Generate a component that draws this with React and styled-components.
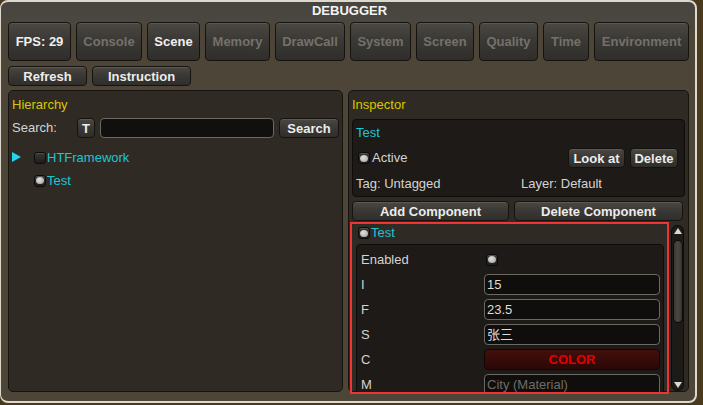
import React from "react";
import styled, { createGlobalStyle, css } from "styled-components";

const Global = createGlobalStyle`
  html, body { margin: 0; padding: 0; }
  body {
    background: #4a3a1d;
    width: 703px;
    height: 405px;
    overflow: hidden;
    font-family: "Liberation Sans", Arial, "Noto Sans CJK SC", sans-serif;
    font-size: 13px;
  }
  * { box-sizing: border-box; }
`;

const Window = styled.div`
  width: 697px;
  height: 403px;
  border: 2px solid #dcd8cc;
  border-left-width: 1.5px;
  border-radius: 8px;
  background: linear-gradient(#47453f 0px, #4a4640 18px, #4d4638 24px, #4d4638 100%);
  display: flex;
  flex-direction: column;
  padding: 0 6px 9px 7px;
`;

const Title = styled.div`
  height: 18px;
  line-height: 18px;
  text-align: center;
  font-weight: bold;
  font-size: 13px;
  color: #f4f4f4;
  padding-left: 2px;
`;

const TabRow = styled.div`
  margin-top: 2px;
  height: 39px;
  display: flex;
  justify-content: space-between;
`;

const buttonBase = css`
  display: flex;
  align-items: center;
  justify-content: center;
  border: 1px solid #15130f;
  border-radius: 4px;
  background: linear-gradient(#4b4843, #3b3935 45%, #302e2b);
  box-shadow: inset 0 1px 0 rgba(255, 255, 255, 0.1);
  font-weight: bold;
  font-size: 13px;
  white-space: nowrap;
  flex: none;
`;

const Tab = styled.div`
  ${buttonBase}
  width: ${(p) => p.$w}px;
  color: ${(p) => (p.$active ? "#f0f0f0" : "#74716b")};
`;

const Button = styled.div`
  ${buttonBase}
  width: ${(p) => p.$w}px;
  height: ${(p) => p.$h || 20}px;
  color: #ececec;
`;

const ActionRow = styled.div`
  margin-top: 5px;
  height: 20px;
  display: flex;
  gap: 5px;
`;

const Panels = styled.div`
  margin-top: 4px;
  flex: 1;
  display: flex;
  gap: 5px;
  min-height: 0;
`;

const Panel = styled.div`
  ${(p) => (p.$w ? `width: ${p.$w}px; flex: none;` : "flex: 1;")}
  background: #302a25;
  border: 1px solid #17130f;
  border-radius: 5px;
  padding: 6px 3px ${(p) => (p.$flush ? 0 : 5)}px 3px;
  display: flex;
  flex-direction: column;
  min-height: 0;
`;

const PanelLabel = styled.div`
  height: 16px;
  line-height: 16px;
  color: #d7c700;
  font-size: 13px;
`;

const SearchRow = styled.div`
  margin-top: 5px;
  height: 20px;
  display: flex;
  align-items: center;
  gap: 5px;
`;

const Text = styled.span`
  color: ${(p) => p.$color || "#d4d4d4"};
  font-size: 13px;
  line-height: 16px;
  white-space: nowrap;
  ${(p) => p.$w && `width: ${p.$w}px; flex: none;`}
`;

const Input = styled.div`
  flex: 1;
  height: 20px;
  background: #12100e;
  border: 1px solid #6b6861;
  border-radius: 4px;
`;

const Tree = styled.div`
  margin-top: 8px;
  display: flex;
  flex-direction: column;
`;

const TreeRow = styled.div`
  height: 23px;
  display: flex;
  align-items: center;
`;

const Arrow = styled.div`
  width: 22px;
  flex: none;
  display: flex;
  align-items: center;
  padding-bottom: 1px;
`;

const ToggleBox = styled.div`
  width: 12px;
  height: 12px;
  flex: none;
  border-radius: 3px;
  border: 1px solid #0c0b0a;
  background: linear-gradient(#3a3835, #1f1d1b);
  box-shadow: inset 0 1px 0 rgba(255, 255, 255, 0.12);
  display: flex;
  align-items: center;
  justify-content: center;
  margin-right: ${(p) => p.$mr ?? 1}px;
  &::after {
    content: "";
    display: ${(p) => (p.$on ? "block" : "none")};
    width: 8px;
    height: 7px;
    border-radius: 50%;
    background: radial-gradient(circle at 40% 35%, #e0e0e0, #a0a0a0);
  }
`;

const Card = styled.div`
  background: #1d1a17;
  border: 1px solid #0f0d0b;
  border-radius: 4px;
`;

const ObjectCard = styled(Card)`
  margin-top: 6px;
  height: 78px;
  padding: 5px 6px 0 3px;
  display: flex;
  flex-direction: column;
`;

const CardRow = styled.div`
  display: flex;
  align-items: center;
  height: ${(p) => p.$h}px;
  margin-top: ${(p) => p.$mt || 0}px;
  padding-left: ${(p) => p.$pl || 0}px;
  gap: ${(p) => p.$gap || 0}px;
`;

const Spacer = styled.div`
  flex: 1;
`;

const CompRow = styled.div`
  margin-top: 4px;
  height: 20px;
  display: flex;
  gap: 5px;
`;

const ScrollRow = styled.div`
  margin-top: 1px;
  flex: 1;
  display: flex;
  gap: 1px;
  min-height: 0;
  margin-bottom: -3px;
`;

const ScrollView = styled.div`
  width: 319px;
  margin-left: -2px;
  border: 2px solid #ee3434;
  overflow: hidden;
  display: flex;
  flex-direction: column;
  padding: 1px 3px 0 4px;
`;

const CompHeader = styled.div`
  height: 18px;
  display: flex;
  align-items: center;
  padding-left: 2px;
`;

const FieldsCard = styled(Card)`
  margin-top: 3px;
  padding: 2px 3px 0 4px;
  flex: none;
`;

const FieldRow = styled.div`
  height: 25px;
  display: flex;
  align-items: center;
`;

const FieldLabel = styled.span`
  width: 123px;
  flex: none;
  color: #d4d4d4;
  font-size: 13px;
`;

const Field = styled.div`
  flex: 1;
  height: 21px;
  background: #0f0e0d;
  border: 1px solid #6c6962;
  border-radius: 4px;
  color: ${(p) => (p.$muted ? "#6f6c67" : "#dcdcdc")};
  font-size: 13px;
  line-height: 19px;
  padding-left: 2px;
  white-space: nowrap;
  overflow: hidden;
`;

const ColorField = styled.div`
  flex: 1;
  height: 21px;
  border: 1px solid #130505;
  border-radius: 4px;
  background: linear-gradient(#430f0b, #2a0807);
  color: #e00000;
  font-weight: bold;
  font-size: 13px;
  display: flex;
  align-items: center;
  justify-content: center;
`;

const ToggleCell = styled.div`
  flex: 1;
  padding-left: 2px;
  display: flex;
`;

const Scrollbar = styled.div`
  width: 13px;
  flex: none;
  margin: 3px 0 3px 1px;
  background: #1d1b18;
  border: 1px solid #0e0c0a;
  border-radius: 6px;
  display: flex;
  flex-direction: column;
  align-items: center;
  padding: 2px 0;
`;

const Thumb = styled.div`
  width: 10px;
  height: 83px;
  margin-top: 6px;
  border-radius: 5px;
  border: 1px solid #0c0b0a;
  background: linear-gradient(90deg, #3a3835, #4a4743 50%, #34322f);
`;

const ArrowUp = () => (
  <svg width="8" height="6" viewBox="0 0 8 6">
    <path d="M4 0 L8 6 L0 6 Z" fill="#d8d8d8" />
  </svg>
);
const ArrowDown = () => (
  <svg width="8" height="6" viewBox="0 0 8 6">
    <path d="M0 0 L8 0 L4 6 Z" fill="#d8d8d8" />
  </svg>
);
const Triangle = () => (
  <svg width="9" height="10" viewBox="0 0 9 10">
    <path d="M0 0 L9 5 L0 10 Z" fill="#22d4f0" />
  </svg>
);

const tabs = [
  ["FPS: 29", 63, true],
  ["Console", 66, false],
  ["Scene", 53, true],
  ["Memory", 65, false],
  ["DrawCall", 70, false],
  ["System", 61, false],
  ["Screen", 58, false],
  ["Quality", 59, false],
  ["Time", 46, false],
  ["Environment", 95, false],
];

const CYAN = "#1cc6d2";

export default function App() {
  return (
    <>
      <Global />
      <Window>
        <Title>DEBUGGER</Title>
        <TabRow>
          {tabs.map(([t, w, a]) => (
            <Tab key={t} $w={w} $active={a}>
              {t}
            </Tab>
          ))}
        </TabRow>
        <ActionRow>
          <Button $w={79}>Refresh</Button>
          <Button $w={99}>Instruction</Button>
        </ActionRow>
        <Panels>
          <Panel $w={335}>
            <PanelLabel>Hierarchy</PanelLabel>
            <SearchRow>
              <Text $w={60}>Search:</Text>
              <Button $w={18}>T</Button>
              <Input />
              <Button $w={60}>Search</Button>
            </SearchRow>
            <Tree>
              <TreeRow>
                <Arrow>
                  <Triangle />
                </Arrow>
                <ToggleBox />
                <Text $color={CYAN}>HTFramework</Text>
              </TreeRow>
              <TreeRow>
                <Arrow />
                <ToggleBox $on />
                <Text $color={CYAN}>Test</Text>
              </TreeRow>
            </Tree>
          </Panel>
          <Panel $flush>
            <PanelLabel>Inspector</PanelLabel>
            <ObjectCard>
              <CardRow $h={16}>
                <Text $color={CYAN}>Test</Text>
              </CardRow>
              <CardRow $h={20} $mt={7} $pl={2} $gap={5}>
                <ToggleBox $on $mr={-3} />
                <Text>Active</Text>
                <Spacer />
                <Button $w={57}>Look at</Button>
                <Button $w={48}>Delete</Button>
              </CardRow>
              <CardRow $h={16} $mt={8}>
                <Text $w={165}>Tag: Untagged</Text>
                <Text>Layer: Default</Text>
              </CardRow>
            </ObjectCard>
            <CompRow>
              <Button $w={157}>Add Component</Button>
              <Button $w={169}>Delete Component</Button>
            </CompRow>
            <ScrollRow>
              <ScrollView>
                <CompHeader>
                  <ToggleBox $on />
                  <Text $color={CYAN}>Test</Text>
                </CompHeader>
                <FieldsCard>
                  <FieldRow>
                    <FieldLabel>Enabled</FieldLabel>
                    <ToggleCell>
                      <ToggleBox $on />
                    </ToggleCell>
                  </FieldRow>
                  <FieldRow>
                    <FieldLabel>I</FieldLabel>
                    <Field>15</Field>
                  </FieldRow>
                  <FieldRow>
                    <FieldLabel>F</FieldLabel>
                    <Field>23.5</Field>
                  </FieldRow>
                  <FieldRow>
                    <FieldLabel>S</FieldLabel>
                    <Field>张三</Field>
                  </FieldRow>
                  <FieldRow>
                    <FieldLabel>C</FieldLabel>
                    <ColorField>COLOR</ColorField>
                  </FieldRow>
                  <FieldRow>
                    <FieldLabel>M</FieldLabel>
                    <Field $muted>City (Material)</Field>
                  </FieldRow>
                </FieldsCard>
              </ScrollView>
              <Scrollbar>
                <ArrowUp />
                <Thumb />
                <Spacer />
                <ArrowDown />
              </Scrollbar>
            </ScrollRow>
          </Panel>
        </Panels>
      </Window>
    </>
  );
}
